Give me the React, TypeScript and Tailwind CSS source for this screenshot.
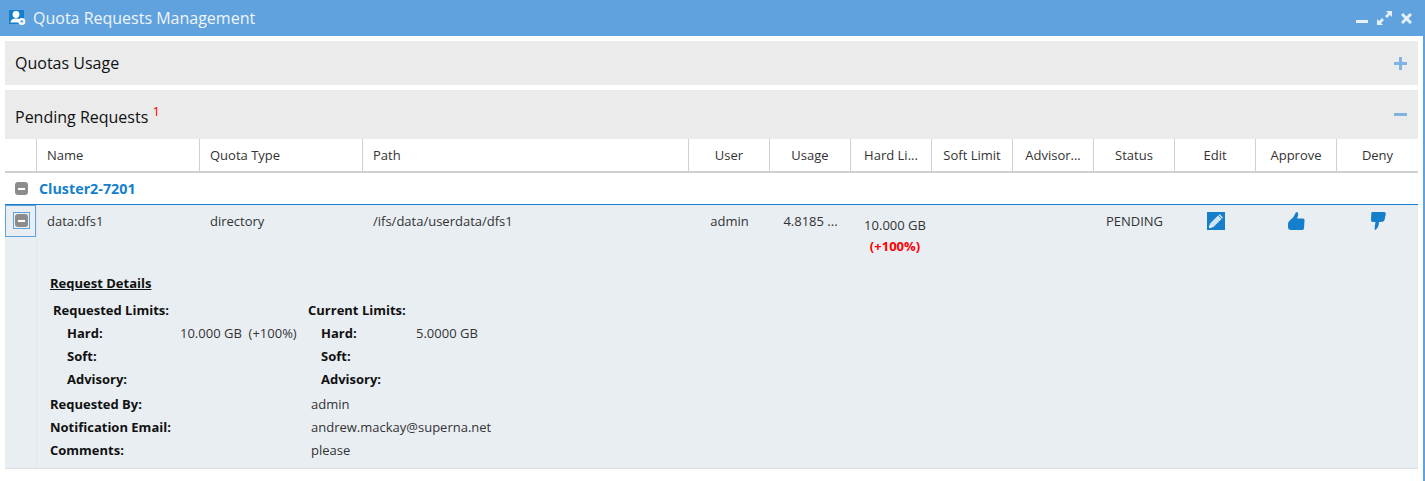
const headers = [
  { label: "Name", align: "text-left pl-[10px]", width: "w-[163px]" },
  { label: "Quota Type", align: "text-left pl-[10px]", width: "w-[163px]" },
  { label: "Path", align: "text-left pl-[10px]", width: "w-[326px]" },
  { label: "User", align: "text-center", width: "w-[81px]" },
  { label: "Usage", align: "text-center", width: "w-[81px]" },
  { label: "Hard Li...", align: "text-center", width: "w-[81px]" },
  { label: "Soft Limit", align: "text-center", width: "w-[81px]" },
  { label: "Advisor...", align: "text-center", width: "w-[81px]" },
  { label: "Status", align: "text-center", width: "w-[81px]" },
  { label: "Edit", align: "text-center", width: "w-[81px]" },
  { label: "Approve", align: "text-center", width: "w-[81px]" },
  { label: "Deny", align: "text-center", width: "w-[81px]" },
];

function CollapseBox() {
  return (
    <div className="flex h-[13px] w-[13px] items-center justify-center rounded-[3px] bg-[#8c8c8c]">
      <div className="h-[2px] w-[7px] bg-white" />
    </div>
  );
}

function UserIcon() {
  return (
    <svg width="17" height="16" viewBox="0 0 17 16">
      <rect width="15" height="14" fill="#157fcc" />
      <circle cx="7" cy="4.500" r="3.400" fill="#fff" />
      <path d="M1.500 12.500c0-2.500 2.500-4 5.500-4 1.500 0 3 .3 4 1l-1 3z" fill="#fff" />
      <circle cx="12.800" cy="11.500" r="3.500" fill="#fff" />
      <circle cx="12.800" cy="11.500" r="1.300" fill="#5fa2dd" />
    </svg>
  );
}

function WindowMinus() {
  return <div className="mt-[7px] h-[3px] w-[12px] bg-[#e6f0f9]" />;
}

function WindowExpand() {
  return (
    <svg width="15" height="14" viewBox="0 0 15 14" fill="#e6f0f9">
      <path d="M9 0h6v6l-2-2-3 3-2-2 3-3z" />
      <path d="M6 14H0V8l2 2 3-3 2 2-3 3z" />
    </svg>
  );
}

function WindowClose() {
  return (
    <svg width="11" height="11" viewBox="0 0 11 11" stroke="#e6f0f9" strokeWidth="3">
      <path d="M1 1l9 9M10 1l-9 9" />
    </svg>
  );
}

function PanelPlus() {
  return (
    <svg width="13" height="13" viewBox="0 0 13 13" stroke="#7fb3e3" strokeWidth="3">
      <path d="M0 6.500h13M6.500 0v13" />
    </svg>
  );
}

function EditIcon() {
  return (
    <svg width="18" height="18" viewBox="0 0 18 18">
      <rect width="18" height="18" fill="#157fcc" />
      <path d="M2 16l1-4.500L12.500 2l3.500 3.500L6.500 15z" fill="#cfe4f6" />
      <path d="M11.300 3.200l3.500 3.500" stroke="#157fcc" strokeWidth="1" />
      <path d="M2 16l.7-3 2.300 2.300z" fill="#fff" />
    </svg>
  );
}

function ThumbUpIcon() {
  return (
    <svg width="17" height="18" viewBox="0 0 17 18" fill="#157fcc">
      <path d="M0 11.500C0 9.500 3 7.500 5 5.500 6.500 4 7 1 8.500 0 10 0 10.500 2 10 4L9 6.500h6c1.500 0 1.700 1.500 1.500 2.500L16 16c0 1.500-1 2-2 2H3c-2 0-3-1-3-3z" />
    </svg>
  );
}

function ThumbDownIcon() {
  return (
    <svg width="15" height="18" viewBox="0 0 15 18" fill="#157fcc">
      <path d="M1.500 0H13c1.500 0 2 1 1.800 2l-1.300 6c-.5 1-1.500 2-3.500 2H8c0 3-1 6-3.500 8-1 0-1-2-.5-5l.5-3H2c-1.500 0-2-1-2-2L.3 1.500C.3.500.8 0 1.500 0z" />
    </svg>
  );
}

function LimitRow({ label, value, labelClass }: { label: string; value?: string; labelClass: string }) {
  return (
    <div className="flex h-[23px] items-center">
      <div className={`${labelClass} font-bold`}>{label}</div>
      <div className="whitespace-pre text-[#333]">{value}</div>
    </div>
  );
}

function InfoRow({ label, value }: { label: string; value: string }) {
  return (
    <div className="flex h-[23px] items-center">
      <div className="w-[261px] font-bold">{label}</div>
      <div className="text-[#333]">{value}</div>
    </div>
  );
}

export default function App() {
  return (
    <div className="h-[481px] w-[1425px] overflow-hidden bg-white font-['Open_Sans',sans-serif] text-[13px] text-[#333]">
      <div className="flex h-[36px] items-center justify-between bg-[#5fa2dd] pl-[9px] pr-[13px]">
        <div className="flex items-center gap-[7px]">
          <UserIcon />
          <span className="text-[16px] text-[#f0f5fb]">Quota Requests Management</span>
        </div>
        <div className="flex items-center gap-[9px]">
          <WindowMinus />
          <WindowExpand />
          <WindowClose />
        </div>
      </div>

      <div className="h-[445px] border-r-2 border-[#5fa2dd] pl-[5px] pr-[5px] pt-[5px]">
        <div className="flex h-[44px] items-center justify-between bg-[#ebebeb] pl-[10px] pr-[11px]">
          <span className="text-[16px] text-[#111]">Quotas Usage</span>
          <PanelPlus />
        </div>

        <div className="mt-[5px] flex h-[49px] items-center justify-between bg-[#ebebeb] pl-[10px] pr-[11px]">
          <span className="mt-[4px] text-[16px] text-[#111]">
            Pending Requests <sup className="text-[13px] text-[#f00]">1</sup>
          </span>
          <div className="h-[3px] w-[13px] bg-[#7fb3e3]" />
        </div>

        <div className="flex h-[34px] border-b-2 border-[#d0d0d0]">
          <div className="w-[32px] border-r border-[#d0d0d0]" />
          {headers.map((h) => (
            <div key={h.label} className={`${h.width} ${h.align} border-r border-[#d0d0d0] pt-[7px] last:border-r-0`}>
              {h.label}
            </div>
          ))}
        </div>

        <div className="flex h-[32px] items-center gap-[11px] border-b border-[#157fcc] pl-[10px]">
          <CollapseBox />
          <span className="text-[14.3px] font-bold text-[#157fcc]">Cluster2-7201</span>
        </div>

        <div className="flex h-[264px] border-b border-[#dcdfe3] bg-[#e9eef3]">
          <div className="w-[32px] border-r border-[#e2e7ec]">
            <div className="h-[32px] w-[31px] border border-[#5fa2dd] pl-[7px] pt-[6px]">
              <div className="flex h-[17px] w-[17px] items-center justify-center border border-[#5fa2dd]">
                <CollapseBox />
              </div>
            </div>
          </div>
          <div className="flex-1">
            <div className="flex h-[69px]">
              <div className="w-[163px] pl-[10px] pt-[7px]">data:dfs1</div>
              <div className="w-[163px] pl-[10px] pt-[7px]">directory</div>
              <div className="w-[326px] pl-[10px] pt-[7px]">/ifs/data/userdata/dfs1</div>
              <div className="w-[81px] pt-[7px] text-center">admin</div>
              <div className="w-[81px] pt-[7px] text-center">4.8185 ...</div>
              <div className="w-[81px] pl-[7px] pt-[11px] text-center">
                10.000 GB
                <div className="mt-[1px] font-bold text-[#f00]">(+100%)</div>
              </div>
              <div className="w-[81px]" />
              <div className="w-[81px]" />
              <div className="w-[81px] pt-[7px] text-center">PENDING</div>
              <div className="flex w-[81px] justify-center pt-[7px]">
                <EditIcon />
              </div>
              <div className="flex w-[81px] justify-center pt-[7px]">
                <ThumbUpIcon />
              </div>
              <div className="flex w-[81px] justify-center pl-[2px] pt-[7px]">
                <ThumbDownIcon />
              </div>
            </div>

            <div className="pl-[13px] text-[#111]">
              <div className="font-bold underline">Request Details</div>
              <div className="mt-[6px] flex">
                <div className="w-[258px] pl-[3px]">
                  <div className="flex h-[23px] items-center font-bold">Requested Limits:</div>
                  <LimitRow label="Hard:" value="10.000 GB  (+100%)" labelClass="ml-[14px] w-[113px]" />
                  <LimitRow label="Soft:" labelClass="ml-[14px] w-[113px]" />
                  <LimitRow label="Advisory:" labelClass="ml-[14px] w-[113px]" />
                </div>
                <div>
                  <div className="flex h-[23px] items-center font-bold">Current Limits:</div>
                  <LimitRow label="Hard:" value="5.0000 GB" labelClass="ml-[13px] w-[95px]" />
                  <LimitRow label="Soft:" labelClass="ml-[13px] w-[95px]" />
                  <LimitRow label="Advisory:" labelClass="ml-[13px] w-[95px]" />
                </div>
              </div>
              <div className="mt-[2px]">
                <InfoRow label="Requested By:" value="admin" />
                <InfoRow label="Notification Email:" value="andrew.mackay@superna.net" />
                <InfoRow label="Comments:" value="please" />
              </div>
            </div>
          </div>
        </div>
      </div>
    </div>
  );
}
